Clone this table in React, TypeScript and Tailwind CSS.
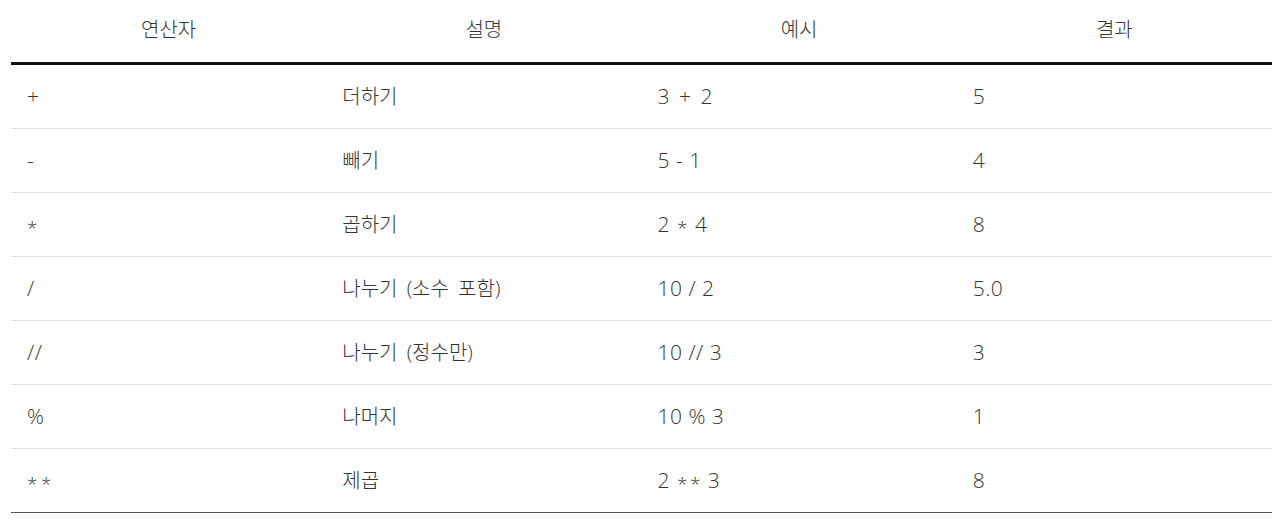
import React from "react";

const rows: [string, string, string, string][] = [
  ["+", "더하기", "3 + 2", "5"],
  ["-", "빼기", "5 - 1", "4"],
  ["*", "곱하기", "2 * 4", "8"],
  ["/", "나누기 (소수 포함)", "10 / 2", "5.0"],
  ["//", "나누기 (정수만)", "10 // 3", "3"],
  ["%", "나머지", "10 % 3", "1"],
  ["**", "제곱", "2 ** 3", "8"],
];

function Latin({ text }: { text: string }) {
  const parts = text.split(/(\*|\+)/);
  const alone = text.length <= 2;
  return (
    <span
      className="text-[21px] font-light tracking-[0.5px] whitespace-pre"
      style={{ fontFamily: '"Open Sans", "Noto Sans", sans-serif' }}
    >
      {parts.map((p, i) =>
        p === "*" ? (
          <span
            key={i}
            className={
              alone
                ? "inline-block translate-y-[3px] text-[19px] pr-[3px]"
                : "inline-block translate-y-[3px] text-[19px] px-[1px]"
            }
          >
            *
          </span>
        ) : p === "+" ? (
          <span key={i} className={alone ? "" : "px-[3px]"}>
            +
          </span>
        ) : (
          <span key={i}>{p}</span>
        )
      )}
    </span>
  );
}

export default function App() {
  return (
    <div
      className="w-[1280px] h-[529px] bg-white text-[#333] font-light"
      style={{ fontFamily: '"Open Sans", "Noto Sans CJK KR", sans-serif' }}
    >
      <div className="ml-[11px] w-[1261px]">
        <div className="grid grid-cols-4 h-[65px] items-center border-b-[3px] border-[#111] text-[20px] pb-[2px]">
          <div className="text-center">연산자</div>
          <div className="text-center">설명</div>
          <div className="text-center">예시</div>
          <div className="text-center">결과</div>
        </div>
        {rows.map((r, i) => (
          <div
            key={i}
            className={
              i === rows.length - 1
                ? "grid grid-cols-4 h-[64px] items-center border-b border-[#555] text-[20px]"
                : "grid grid-cols-4 h-[64px] items-center border-b border-[#ddd] text-[20px]"
            }
          >
            <div className="px-4">
              <Latin text={r[0]} />
            </div>
            <div className="px-4 whitespace-pre [word-spacing:4px]">{r[1]}</div>
            <div className="px-4">
              <Latin text={r[2]} />
            </div>
            <div className="px-4">
              <Latin text={r[3]} />
            </div>
          </div>
        ))}
      </div>
    </div>
  );
}
